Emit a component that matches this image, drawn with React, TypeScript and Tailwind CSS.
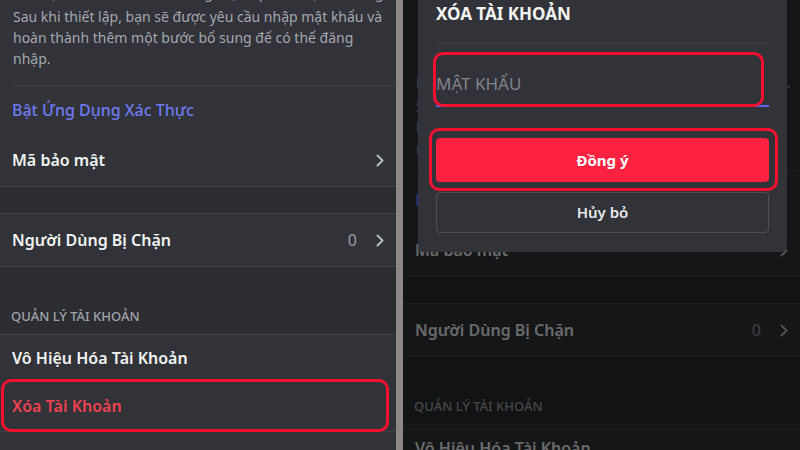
import React from "react";

function Chevron() {
  return (
    <svg width="8" height="13" viewBox="0 0 8 13" fill="none" className="shrink-0">
      <path d="M1.5 1.5 L6.5 6.5 L1.5 11.5" stroke="#b5bac1" strokeWidth="2" strokeLinecap="round" strokeLinejoin="round" />
    </svg>
  );
}

function SettingsList({ className }: { className: string }) {
  return (
    <div className={className}>
      <div className="bg-[#313338]">
        <div className="px-[13px] pb-[16px] text-[14px] leading-[21px] text-[#a4a7ae] whitespace-nowrap">
          <div className="relative -top-[3px]">Bảo vệ tài khoản Discord bằng một lớp xác thực bổ sung.</div>
          <div>Sau khi thiết lập, bạn sẽ được yêu cầu nhập mật khẩu và</div>
          <div>hoàn thành thêm một bước bổ sung để có thể đăng</div>
          <div>nhập.</div>
        </div>
        <div className="ml-[12px] h-px bg-[#3f4147]" />
        <div className="flex h-[48px] items-center px-[12px] text-[16px] font-medium text-[#6e7af3]">
          Bật Ứng Dụng Xác Thực
        </div>
        <div className="flex h-[52px] items-center justify-between pl-[12px] pr-[12px] text-[16px] font-semibold text-[#f2f3f5]">
          <span>Mã bảo mật</span>
          <Chevron />
        </div>
      </div>
      <div className="h-px bg-[#3f4147]" />
      <div className="h-[26px] bg-[#2b2d31]" />
      <div className="h-px bg-[#3f4147]" />
      <div className="flex h-[52px] items-center justify-between bg-[#313338] pl-[12px] pr-[12px] text-[16px] font-semibold text-[#f2f3f5]">
        <span>Người Dùng Bị Chặn</span>
        <div className="flex items-center gap-[19px]">
          <span className="font-normal text-[#9a9ca3]">0</span>
          <Chevron />
        </div>
      </div>
      <div className="h-px bg-[#3f4147]" />
      <div className="flex h-[67px] items-end bg-[#2b2d31] px-[11px] pb-[10px] text-[13px] font-medium leading-[16px] text-[#a0a3aa]">
        QUẢN LÝ TÀI KHOẢN
      </div>
      <div className="h-px bg-[#3f4147]" />
      <div className="bg-[#313338]">
        <div className="flex h-[46px] items-center px-[12px] text-[16px] font-semibold text-[#f2f3f5]">
          Vô Hiệu Hóa Tài Khoản
        </div>
        <div className="flex h-[50px] items-center px-[12px] text-[16px] font-semibold text-[#ef4150]">
          Xóa Tài Khoản
        </div>
      </div>
      <div className="h-px bg-[#3f4147]" />
      <div className="h-[80px] bg-[#313338]" />
    </div>
  );
}

export default function App() {
  return (
    <div
      className="flex h-[450px] w-[800px] overflow-hidden bg-[#111214]"
      style={{ fontFamily: '"Noto Sans", "Open Sans", sans-serif' }}
    >
      {/* Left panel */}
      <div className="relative h-[450px] w-[396px] shrink-0 overflow-hidden bg-[#313338]">
        <SettingsList className="-mt-[15px]" />
        <div className="absolute left-[1px] top-[379px] h-[53px] w-[388px] rounded-[10px] border-[3px] border-[#f3112f]" />
      </div>

      {/* Divider strip */}
      <div className="h-[450px] w-[7px] shrink-0 bg-[#8c8785]" />

      {/* Right panel */}
      <div className="relative h-[450px] flex-1 overflow-hidden bg-[#313338]">
        <SettingsList className="mt-[75px]" />
        <div className="absolute inset-0 bg-black/[0.57]" />

        {/* Dialog */}
        <div className="absolute left-[15px] top-0 w-[369px] rounded-b-[6px] bg-[#313338] px-[18px] pb-[19px] pt-[3px]">
          <div className="text-[17px] font-bold leading-[22px] text-[#f2f3f5]">XÓA TÀI KHOẢN</div>
          <div className="mt-[18px] h-px bg-[#3f4147]" />
          <div className="flex h-[63px] items-end border-b-2 border-[#5865f2] pb-[10px]">
            <span className="text-[17px] leading-[22px] text-[#80838a]">MẬT KHẨU</span>
          </div>
          <div className="mt-[31px] flex h-[44px] items-center justify-center rounded-[4px] bg-[#ff2140] text-[15px] font-bold text-white">
            Đồng ý
          </div>
          <div className="mt-[10px] flex h-[41px] items-center justify-center rounded-[4px] border border-[#4e5058] text-[15px] font-semibold text-[#e6e8eb]">
            Hủy bỏ
          </div>
        </div>

        {/* Highlights */}
        <div className="absolute left-[30px] top-[52px] h-[55px] w-[331px] rounded-[10px] border-[3px] border-[#f3112f]" />
        <div className="absolute left-[26px] top-[128px] h-[63px] w-[349px] rounded-[10px] border-[3px] border-[#f3112f]" />
      </div>
    </div>
  );
}
